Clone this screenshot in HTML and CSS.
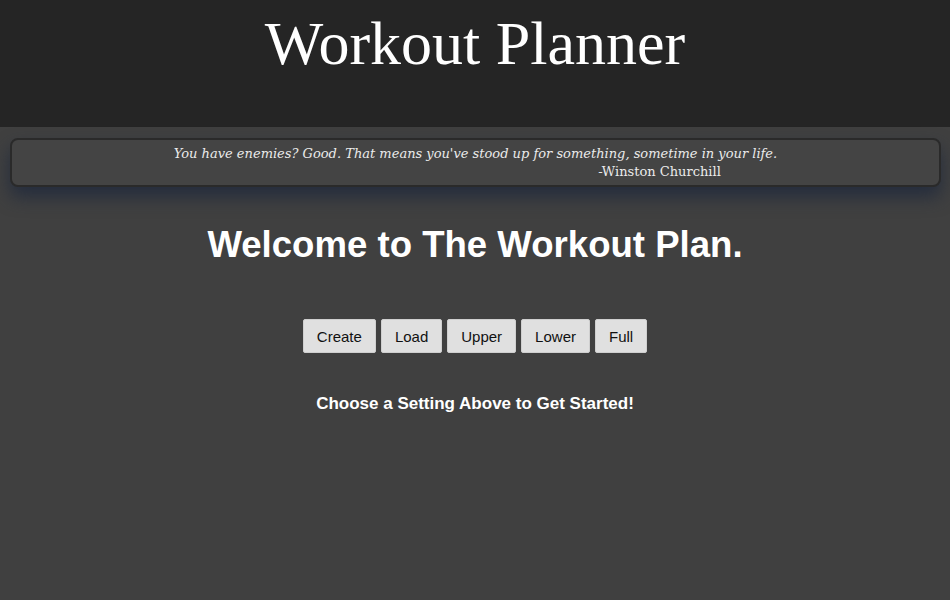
FILE: index.html
```html
<!DOCTYPE html>
<html>
<head>
<meta charset="utf-8">
<link rel="stylesheet" href="styles.css">
</head>
<body>
<header class="top">
  <h1 class="title">Workout Planner</h1>
</header>
<div class="quote">
  <p class="quote-text">You have enemies? Good. That means you've stood up for something, sometime in your life.</p>
  <p class="quote-author">-Winston Churchill</p>
</div>
<main class="main">
  <h2 class="welcome">Welcome to The Workout Plan.</h2>
  <div class="buttons">
    <button class="btn">Create</button>
    <button class="btn">Load</button>
    <button class="btn">Upper</button>
    <button class="btn">Lower</button>
    <button class="btn">Full</button>
  </div>
  <p class="hint">Choose a Setting Above to Get Started!</p>
</main>
</body>
</html>
```
FILE: styles.css
```css
html, body {
  margin: 0;
  padding: 0;
}
body {
  background: #404040;
  height: 600px;
  overflow: hidden;
  font-family: "Liberation Sans", Arial, sans-serif;
  color: #fff;
}
.top {
  background: #252525;
  height: 127px;
  box-sizing: border-box;
  padding-top: 8px;
}
.title {
  margin: 0;
  text-align: center;
  font-family: "Liberation Serif", Georgia, serif;
  font-weight: normal;
  font-size: 62px;
  line-height: 70px;
  color: #fff;
}
.quote {
  margin: 11px 9px 0 10px;
  height: 49px;
  box-sizing: border-box;
  border: 2px solid #2a2a2a;
  border-radius: 8px;
  background: #444;
  box-shadow: 0 10px 18px rgba(30, 40, 60, 0.8);
  font-family: "DejaVu Serif", Georgia, serif;
  color: #ebebeb;
  padding-top: 5px;
}
.quote p {
  margin: 0;
  font-size: 13px;
  line-height: 18px;
  text-align: center;
}
.quote-text {
  font-style: italic;
}
.quote-author {
  padding-left: 368px;
}
.main {
  text-align: center;
}
.welcome {
  margin: 36px 0 0;
  font-size: 36.6px;
  line-height: 44px;
  font-weight: bold;
}
.buttons {
  display: flex;
  justify-content: center;
  gap: 5px;
  margin-top: 52px;
}
.btn {
  height: 34px;
  padding: 0 13px;
  border: 1px solid #cfcfcf;
  border-radius: 2px;
  background: #e0e0e0;
  color: #111;
  font-family: "Liberation Sans", Arial, sans-serif;
  font-size: 15px;
}
.hint {
  margin: 40px 0 0;
  font-size: 17px;
  font-weight: bold;
  line-height: 22px;
}
```
